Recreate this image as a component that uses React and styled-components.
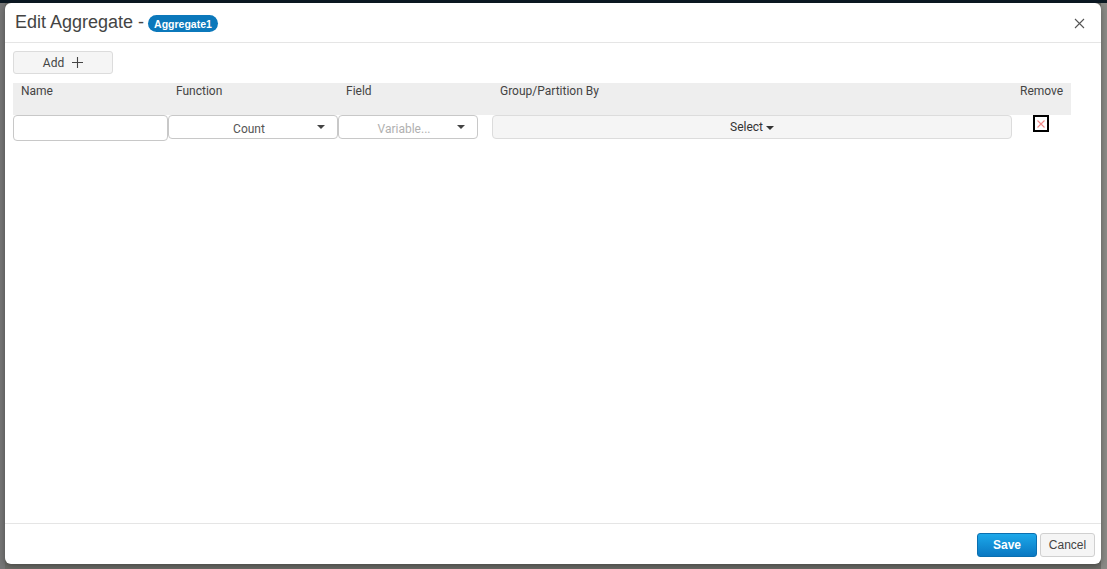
import React from 'react'
import styled, { createGlobalStyle } from 'styled-components'

const GlobalStyle = createGlobalStyle`
  html, body {
    margin: 0;
    padding: 0;
  }
  body {
    font-family: Roboto, "Liberation Sans", Arial, sans-serif;
    background: #6d6d68;
  }
`

const columns = [
  { key: 'name', label: 'Name' },
  { key: 'function', label: 'Function' },
  { key: 'field', label: 'Field' },
  { key: 'group', label: 'Group/Partition By' },
  { key: 'remove', label: 'Remove', align: 'right' },
]

const App = () => {
  return (
    <>
      <GlobalStyle />
      <Backdrop>
        <Modal>
          <Header>
            <Title>Edit Aggregate -</Title>
            <Badge>Aggregate1</Badge>
            <CloseButton aria-label="close">
              <svg width="11" height="11" viewBox="0 0 11 11">
                <path d="M1 1 L10 10 M10 1 L1 10" stroke="#555" strokeWidth="1.1" fill="none" />
              </svg>
            </CloseButton>
          </Header>

          <Body>
            <AddButton>
              Add
              <svg width="11" height="11" viewBox="0 0 11 11">
                <path d="M5.5 0 V11 M0 5.5 H11" stroke="#444" strokeWidth="1.1" />
              </svg>
            </AddButton>

            <Table>
              {columns.map((c) => (
                <HeadCell key={c.key} $align={c.align}>{c.label}</HeadCell>
              ))}

              <Cell>
                <TextInput type="text" />
              </Cell>
              <Cell>
                <Dropdown>
                  <span>Count</span>
                  <Caret $right={12} />
                </Dropdown>
              </Cell>
              <Cell>
                <Dropdown $width={140} $placeholder>
                  <span>Variable...</span>
                  <Caret $right={12} />
                </Dropdown>
              </Cell>
              <Cell>
                <SelectButton>
                  Select
                  <SmallCaret />
                </SelectButton>
              </Cell>
              <Cell $pad={21}>
                <RemoveBox>
                  <svg width="10" height="10" viewBox="0 0 10 10">
                    <path d="M1.5 1.5 L8.5 8.5 M8.5 1.5 L1.5 8.5" stroke="#f08a8a" strokeWidth="1.1" />
                  </svg>
                </RemoveBox>
              </Cell>
            </Table>
          </Body>

          <Footer>
            <SaveButton>Save</SaveButton>
            <CancelButton>Cancel</CancelButton>
          </Footer>
        </Modal>
      </Backdrop>
    </>
  )
}

const Backdrop = styled.div`
  height: 569px;
  box-sizing: border-box;
  padding: 3px 6px 5px 5px;
  background: linear-gradient(to bottom, #0c1923 0, #0c1923 3px, transparent 3px),
    linear-gradient(to right, #767676 0, #767676 5px, #6d6d68 5px, #6d6d68 1101px, #8a8a86 1101px);
  overflow: hidden;
`

const Modal = styled.div`
  height: 561px;
  background: #fff;
  border-radius: 6px;
  display: flex;
  flex-direction: column;
  box-shadow: 0 2px 6px rgba(0, 0, 0, 0.35);
`

const Header = styled.div`
  height: 39px;
  display: flex;
  align-items: center;
  padding: 0 0 0 10px;
  border-bottom: 1px solid #e5e5e5;
`

const Title = styled.h4`
  margin: 0 4px 0 0;
  font-family: "Liberation Sans", Arial, sans-serif;
  font-weight: 400;
  font-size: 18px;
  color: #444;
`

const Badge = styled.span`
  display: inline-flex;
  align-items: center;
  height: 17px;
  padding: 0 6px;
  border-radius: 9px;
  background: #0b78bb;
  color: #fff;
  font-family: "Liberation Sans", Arial, sans-serif;
  font-weight: 700;
  font-size: 10.5px;
  margin-top: 2px;
`

const CloseButton = styled.button`
  margin-left: auto;
  margin-right: 16px;
  margin-top: 2px;
  border: none;
  background: none;
  padding: 0;
  width: 11px;
  height: 11px;
  display: flex;
`

const Body = styled.div`
  flex: 1;
  padding: 8px 8px 0 8px;
`

const AddButton = styled.button`
  width: 100px;
  height: 23px;
  display: flex;
  align-items: center;
  justify-content: center;
  gap: 8px;
  background: #f5f5f5;
  border: 1px solid #dcdcdc;
  border-radius: 3px;
  font-family: Roboto, "Liberation Sans", Arial, sans-serif;
  font-size: 12px;
  color: #444;
  padding: 0;
`

const Table = styled.div`
  margin-top: 9px;
  width: 1058px;
  display: grid;
  grid-template-columns: 155px 170px 154px 520px 59px;
  grid-template-rows: 32px auto;
`

const HeadCell = styled.div`
  background: #eeeeee;
  padding: 1px 8px 0 8px;
  font-size: 12px;
  color: #444;
  text-align: ${(p) => p.$align || 'left'};
`

const Cell = styled.div`
  padding-left: ${(p) => p.$pad || 0}px;
`

const TextInput = styled.input`
  box-sizing: border-box;
  width: 155px;
  height: 26px;
  border: 1px solid #c8c8c8;
  border-radius: 4px;
  outline: none;
  margin: 0;
`

const Dropdown = styled.div`
  box-sizing: border-box;
  position: relative;
  width: ${(p) => p.$width || 170}px;
  height: 24px;
  border: 1px solid #c8c8c8;
  border-radius: 4px;
  display: flex;
  align-items: center;
  justify-content: center;
  padding-right: 8px;
  padding-top: 3px;
  font-size: 12px;
  color: ${(p) => (p.$placeholder ? '#b0b0b0' : '#555')};
`

const Caret = styled.span`
  position: absolute;
  right: ${(p) => p.$right}px;
  top: 9px;
  width: 0;
  height: 0;
  border-left: 4px solid transparent;
  border-right: 4px solid transparent;
  border-top: 4px solid #444;
`

const SelectButton = styled.div`
  box-sizing: border-box;
  width: 520px;
  height: 24px;
  background: #f5f5f5;
  border: 1px solid #dcdcdc;
  border-radius: 4px;
  display: flex;
  align-items: center;
  justify-content: center;
  gap: 3px;
  font-size: 12px;
  color: #333;
`

const SmallCaret = styled.span`
  width: 0;
  height: 0;
  margin-top: 2px;
  border-left: 4px solid transparent;
  border-right: 4px solid transparent;
  border-top: 4px solid #333;
`

const RemoveBox = styled.div`
  box-sizing: border-box;
  width: 16px;
  height: 17px;
  border: 2px solid #000;
  display: flex;
  align-items: center;
  justify-content: center;
`

const Footer = styled.div`
  height: 41px;
  border-top: 1px solid #e5e5e5;
  display: flex;
  align-items: flex-start;
  justify-content: flex-end;
  gap: 3px;
  padding: 9px 6px 0 0;
  box-sizing: border-box;
`

const SaveButton = styled.button`
  width: 60px;
  height: 24px;
  border: 1px solid #0a6fb0;
  border-radius: 3px;
  background: linear-gradient(to bottom, #1ca8ea, #0a78c2);
  color: #fff;
  font-family: "Liberation Sans", Arial, sans-serif;
  font-weight: 700;
  font-size: 12px;
  padding: 0;
`

const CancelButton = styled.button`
  width: 55px;
  height: 24px;
  border: 1px solid #d0d0d0;
  border-radius: 3px;
  background: #f5f5f5;
  color: #444;
  font-family: "Liberation Sans", Arial, sans-serif;
  font-size: 12px;
  padding: 0;
`

export default App
